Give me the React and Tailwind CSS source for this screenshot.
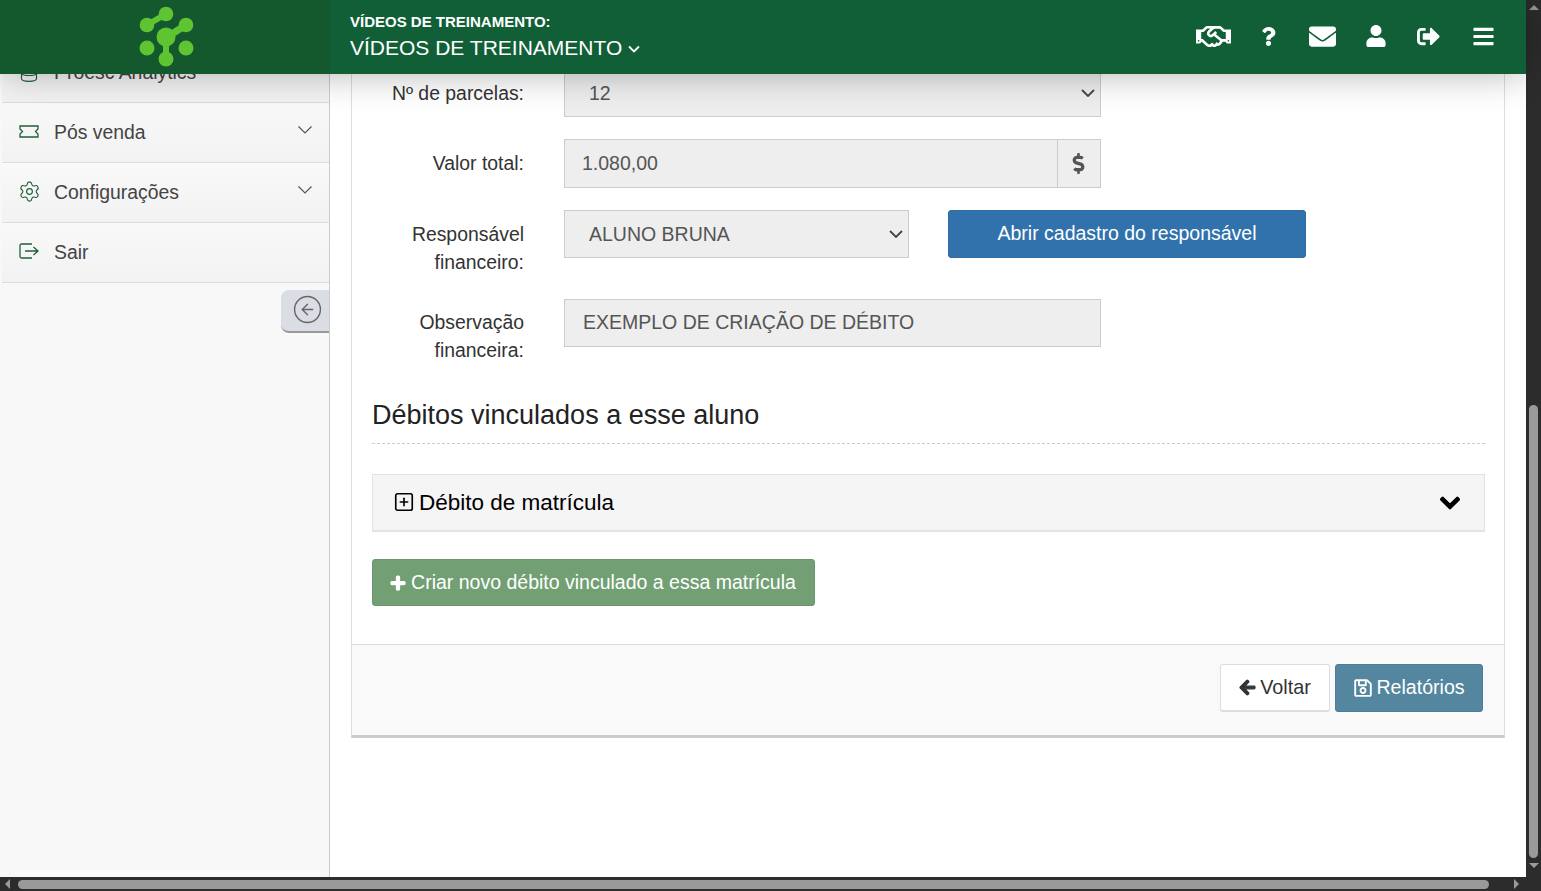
import { CircleArrowLeft, Settings, Database, SquarePlus } from 'lucide-react';
import {
  FaRegHandshake,
  FaQuestion,
  FaEnvelope,
  FaUser,
  FaSignOutAlt,
  FaBars,
  FaPlus,
  FaArrowLeft,
  FaRegSave,
  FaChevronDown,
  FaDollarSign,
} from 'react-icons/fa';

function Logo() {
  return (
    <svg width="70" height="74" viewBox="0 0 70 74" className="block">
      <g fill="#5ec432" stroke="#5ec432">
        <line x1="12" y1="25" x2="31" y2="14" strokeWidth="6" />
        <line x1="51" y1="25" x2="32" y2="37" strokeWidth="7" />
        <line x1="31" y1="37" x2="31" y2="59" strokeWidth="6" />
        <circle cx="12" cy="25" r="7.300" stroke="none" />
        <circle cx="31" cy="14" r="7.300" stroke="none" />
        <circle cx="51" cy="25" r="7.300" stroke="none" />
        <circle cx="31" cy="37" r="9.500" stroke="none" />
        <circle cx="12" cy="48" r="7.500" stroke="none" />
        <circle cx="51" cy="48" r="7.500" stroke="none" />
        <circle cx="31" cy="59" r="7.500" stroke="none" />
      </g>
    </svg>
  );
}

function TicketIcon() {
  return (
    <svg width="20" height="13" viewBox="0 0 20 13" fill="none" stroke="#1f5f3a" strokeWidth="1.3" className="block mb-[3px]">
      <path d="M1 1h18v3l-2.500 2.500L19 9v3H1V9l2.500-2.500L1 4z" />
    </svg>
  );
}

function ExitIcon() {
  return (
    <svg width="20" height="16" viewBox="0 0 20 16" fill="none" stroke="#1f5f3a" strokeWidth="1.3" className="block mb-[3px]">
      <path d="M13 1H2.500Q1 1 1 2.500v11Q1 15 2.500 15H13" />
      <path d="M6 8h13M14.500 4l4.500 4-4.500 4" />
    </svg>
  );
}

function Chevron() {
  return (
    <svg width="14" height="8" viewBox="0 0 14 8" fill="none" stroke="#555" strokeWidth="1.2" className="block">
      <path d="M0.500 0.500L7 7l6.500-6.500" />
    </svg>
  );
}

function MenuItem({ icon, label, arrow }) {
  return (
    <div className="ml-[2px] h-[60px] flex items-center border-b border-[#dcdcdc] bg-gradient-to-b from-[#f9f9f9] to-[#f2f2f2]">
      <div className="w-[20px] ml-[17px] mr-[15px] flex justify-center">{icon}</div>
      <span className="text-[19.400px] text-[#444]">{label}</span>
      {arrow && (
        <div className="ml-auto mr-[17px] -mt-[5px]">
          <Chevron />
        </div>
      )}
    </div>
  );
}

function Sidebar() {
  return (
    <aside className="w-[330px] shrink-0 bg-[#f8f8f8] border-r border-[#ccc] overflow-hidden">
      <div className="-mt-[31px]">
        <MenuItem icon={<Database size={20} color="#1f5f3a" strokeWidth={1.4} />} label="Proesc Analytics" />
        <MenuItem icon={<TicketIcon />} label="Pós venda" arrow />
        <MenuItem icon={<Settings size={23} color="#1f5f3a" strokeWidth={1.2} className="shrink-0 mb-[2px]" />} label="Configurações" arrow />
        <MenuItem icon={<ExitIcon />} label="Sair" />
      </div>
      <div className="mt-[7px] ml-auto w-[48px] h-[43px] bg-[#dadde4] rounded-l-lg border-b-2 border-[#999] flex items-center justify-end pr-[6px] pb-[2px]">
        <CircleArrowLeft size={31} color="#666" strokeWidth={1.1} />
      </div>
    </aside>
  );
}

function Header() {
  return (
    <header className="relative z-10 h-[74px] shrink-0 flex bg-[#115f37] shadow-[0_0_36px_rgba(0,0,0,0.3)]">
      <div className="w-[330px] shrink-0 flex justify-center bg-[#14592e] pl-[9px]">
        <Logo />
      </div>
      <div className="flex-1 pl-[20px] text-white">
        <div className="mt-[14px] text-[15px] font-bold leading-[16px]">VÍDEOS DE TREINAMENTO:</div>
        <div className="mt-[3px] text-[21px] leading-[30px] flex items-center gap-[6px]">
          VÍDEOS DE TREINAMENTO
          <svg width="12" height="8" viewBox="0 0 12 8" fill="none" stroke="#fff" strokeWidth="1.8" className="mt-[1px]">
            <path d="M1 1.500l5 5 5-5" />
          </svg>
        </div>
      </div>
      <div className="flex items-center pr-[31px] pb-[2px] text-white">
        <FaRegHandshake size={35} className="mr-[28px]" />
        <FaQuestion size={19} className="mr-[31px]" />
        <FaEnvelope size={27} className="mr-[29px]" />
        <FaUser size={22} className="mr-[30px]" />
        <FaSignOutAlt size={23} className="mr-[32px]" />
        <FaBars size={23} />
      </div>
    </header>
  );
}

function FormRow({ label, mb, pt = 'pt-[10px]', children }) {
  return (
    <div className={`flex ${mb}`}>
      <label className={`w-[152px] shrink-0 ${pt} text-right text-[19.400px] leading-[28px] text-[#333]`}>{label}</label>
      <div className="ml-[40px] flex items-start">{children}</div>
    </div>
  );
}

const fieldClass = 'bg-[#eee] border border-[#ccc] text-[19.500px] text-[#555] outline-none';

function SelectField({ value, width, option }) {
  return (
    <div className="relative">
      <select defaultValue={value} className={`${fieldClass} ${width} h-[48px] pl-[24px] pt-[1px] appearance-none block`}>
        <option value={value}>{option}</option>
      </select>
      <svg width="14" height="8" viewBox="0 0 14 8" fill="none" stroke="#444" strokeWidth="1.8" className="absolute right-[6px] top-[20px] pointer-events-none">
        <path d="M1 1l6 6 6-6" />
      </svg>
    </div>
  );
}

function Panel() {
  return (
    <div className="ml-[21px] w-[1154px] bg-white border-x border-[#ddd] border-b-[3px] border-b-[#ccc]">
      <div className="pl-[20px] pr-[19px] -mt-[5px]">
        <FormRow label="Nº de parcelas:" mb="mb-[22px]">
          <SelectField value="12" width="w-[537px]" option="12" />
        </FormRow>
        <FormRow label="Valor total:" mb="mb-[22px]">
          <div className="flex w-[537px] h-[49px]">
            <input readOnly value="1.080,00" className={`${fieldClass} flex-1 min-w-0 px-[17px]`} />
            <div className="w-[43px] bg-[#eee] border border-l-0 border-[#ccc] flex items-center justify-center text-[#555] pr-[2px]">
              <FaDollarSign size={21} />
            </div>
          </div>
        </FormRow>
        <FormRow label={<>Responsável<br />financeiro:</>} mb="mb-[23px]">
          <SelectField value="bruna" width="w-[345px]" option="ALUNO BRUNA" />
          <button className="ml-[39px] w-[358px] h-[48px] bg-[#3172ad] border border-[#2e6da4] rounded-[3px] text-white text-[19.500px]">
            Abrir cadastro do responsável
          </button>
        </FormRow>
        <FormRow label={<>Observação<br />financeira:</>} mb="mb-[1px]" pt="pt-[9px]">
          <input readOnly value="EXEMPLO DE CRIAÇÃO DE DÉBITO" className={`${fieldClass} w-[537px] h-[48px] pl-[18px] pb-[2px]`} />
        </FormRow>

        <h2 className="mt-[32px] pb-[9px] text-[27px] leading-[38px] text-[#222] border-b border-dashed border-[#ccc]">
          Débitos vinculados a esse aluno
        </h2>

        <div className="mt-[30px] h-[58px] pl-[20px] pr-[23px] flex items-center bg-[#f5f5f5] border border-[#e3e3e3] border-b-2 text-black">
          <SquarePlus size={22} strokeWidth={1.8} className="mb-[2px]" />
          <span className="ml-[4px] text-[22.500px]">Débito de matrícula</span>
          <FaChevronDown size={22} className="ml-auto" stroke="currentColor" strokeWidth={30} />
        </div>

        <button className="mt-[27px] mb-[38px] h-[47px] w-[443px] pr-[1px] flex items-center justify-center bg-[#72a074] border border-[#6a966c] rounded-[3px] text-white text-[19.500px]">
          <FaPlus size={16} className="mr-[5px]" stroke="currentColor" strokeWidth={40} />
          Criar novo débito vinculado a essa matrícula
        </button>
      </div>

      <div className="h-[91px] pt-[19px] pr-[21px] flex justify-end gap-[5px] items-start bg-[#f9f9f9] border-t border-[#ddd]">
        <button className="w-[110px] h-[48px] flex items-center justify-center bg-white border border-[#ddd] border-b-2 rounded-[3px] text-[#333] text-[19.800px]">
          <FaArrowLeft size={17} className="mr-[4px]" stroke="currentColor" strokeWidth={40} />
          Voltar
        </button>
        <button className="w-[148px] h-[48px] flex items-center justify-center bg-[#5486a0] border border-[#4d7d96] rounded-[3px] text-white text-[19.600px]">
          <FaRegSave size={20} className="mr-[3px]" />
          Relatórios
        </button>
      </div>
    </div>
  );
}

function VerticalScrollbar() {
  return (
    <div className="w-[15px] shrink-0 bg-[#2c2c2c] flex flex-col items-center">
      <div className="mt-[5px] w-0 h-0 border-x-[5px] border-x-transparent border-b-[5px] border-b-[#9a9a9a]" />
      <div className="mt-[395px] w-[9px] h-[453px] rounded-full bg-[#9a9a9a]" />
      <div className="mt-[5px] w-0 h-0 border-x-[5px] border-x-transparent border-t-[5px] border-t-[#9a9a9a]" />
    </div>
  );
}

function HorizontalScrollbar() {
  return (
    <div className="h-[14px] shrink-0 bg-[#2c2c2c] flex items-center pl-[5px]">
      <div className="w-0 h-0 border-y-[5px] border-y-transparent border-r-[5px] border-r-[#9a9a9a]" />
      <div className="ml-[8px] w-[1471px] h-[9px] rounded-full bg-[#9a9a9a]" />
      <div className="ml-[25px] w-0 h-0 border-y-[5px] border-y-transparent border-l-[5px] border-l-[#9a9a9a]" />
    </div>
  );
}

export default function App() {
  return (
    <div className="w-[1541px] h-[891px] flex flex-col overflow-hidden bg-white font-['Liberation_Sans',Arial,sans-serif]">
      <div className="flex flex-1 min-h-0">
        <div className="w-[1526px] shrink-0 flex flex-col min-h-0">
          <Header />
          <div className="flex flex-1 min-h-0">
            <Sidebar />
            <main className="flex-1 bg-white overflow-hidden">
              <Panel />
            </main>
          </div>
        </div>
        <VerticalScrollbar />
      </div>
      <HorizontalScrollbar />
    </div>
  );
}
